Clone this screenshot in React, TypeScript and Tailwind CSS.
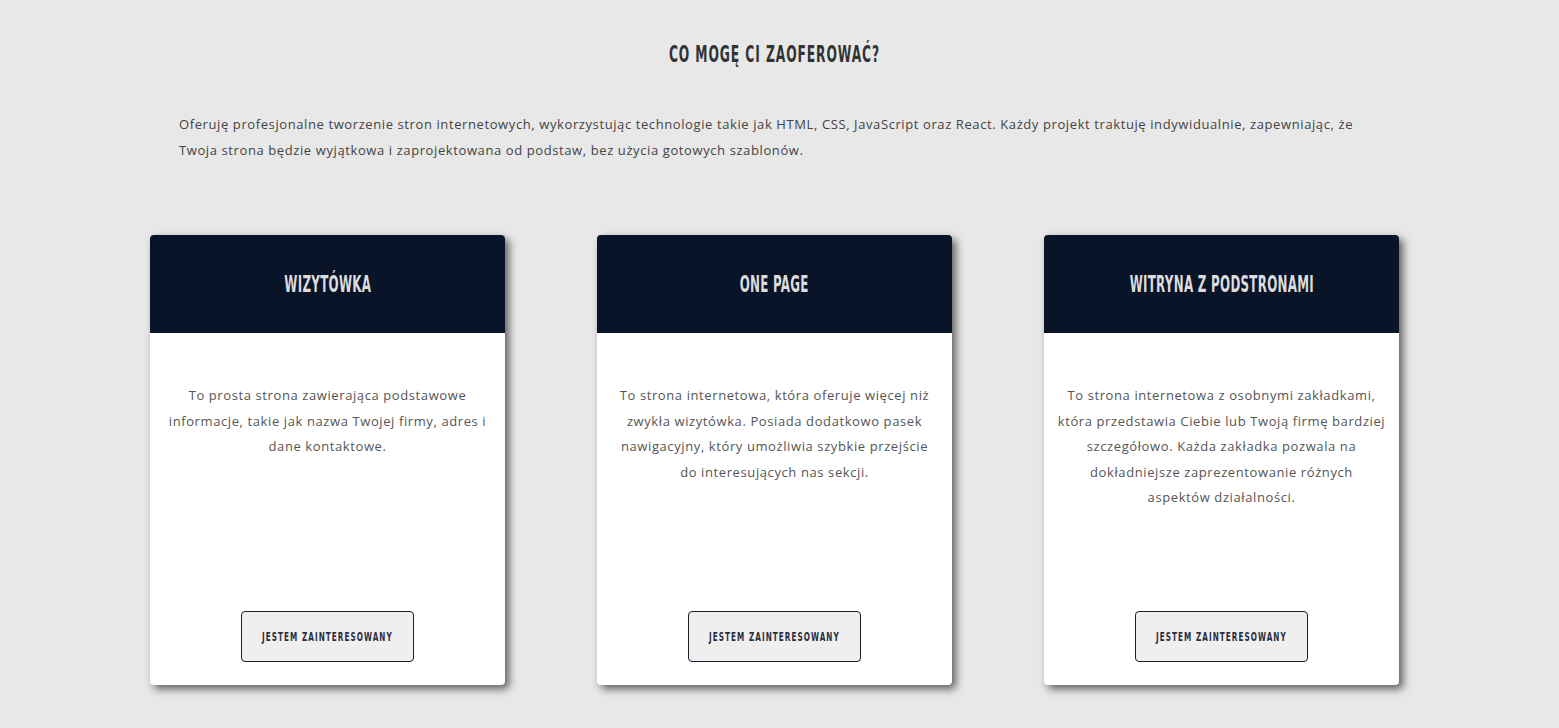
const cards = [
  {
    title: "Wizytówka",
    text: "To prosta strona zawierająca podstawowe informacje, takie jak nazwa Twojej firmy, adres i dane kontaktowe.",
  },
  {
    title: "One page",
    text: "To strona internetowa, która oferuje więcej niż zwykła wizytówka. Posiada dodatkowo pasek nawigacyjny, który umożliwia szybkie przejście do\u00a0interesujących nas sekcji.",
  },
  {
    title: "Witryna z podstronami",
    text: "To strona internetowa z osobnymi zakładkami, która przedstawia Ciebie lub Twoją firmę bardziej szczegółowo. Każda zakładka pozwala na dokładniejsze zaprezentowanie różnych aspektów działalności.",
  },
];

const display = "font-['DejaVu_Sans_Condensed','DejaVu_Sans',sans-serif] font-bold uppercase whitespace-nowrap";
const body = "font-['Open_Sans','Lato',sans-serif]";

export default function App() {
  return (
    <div className="min-h-screen bg-[#e8e8e8] pr-[10px]">
      {/* Heading */}
      <div className="flex justify-center pt-[40px]">
        <h2 className={`${display} inline-block scale-x-[0.595] text-[23px] leading-[28px] tracking-[1.5px] text-[#333]`}>
          Co mogę ci zaoferować?
        </h2>
      </div>

      {/* Intro */}
      <p className={`${body} mx-auto mt-[43px] w-[1191px] text-[13px] leading-[26px] tracking-[0.6px] text-[#444]`}>
        Oferuję profesjonalne tworzenie stron internetowych, wykorzystując technologie takie jak HTML, CSS, JavaScript oraz React. Każdy projekt traktuję indywidualnie, zapewniając, że Twoja strona będzie wyjątkowa i zaprojektowana od podstaw, bez użycia gotowych szablonów.
      </p>

      {/* Offer cards */}
      <div className="mx-auto mt-[72px] flex w-[1249px] gap-[92px]">
        {cards.map((c) => (
          <div
            key={c.title}
            className="flex h-[450px] w-[355px] flex-col overflow-hidden rounded-[4px] bg-white shadow-[4px_4px_8px_rgba(0,0,0,0.6)]"
          >
            <div className="flex h-[98px] items-center justify-center bg-[#0a1428]">
              <h3 className={`${display} inline-block scale-x-[0.573] text-[23px] leading-[28px] tracking-[0.5px] text-[#dcdcdc]`}>
                {c.title}
              </h3>
            </div>
            <div className="flex flex-1 flex-col items-center px-[13px] pt-[50px] pb-[23px]">
              <p className={`${body} text-center text-[13px] leading-[25.5px] tracking-[0.6px] text-[#555]`}>
                {c.text}
              </p>
              <button className="mt-auto flex h-[51px] w-[173px] items-center justify-center rounded-[4px] border border-[#1a1f2e] bg-[#efefef]">
                <span className={`${display} inline-block scale-x-[0.62] text-[13px] leading-[16px] tracking-[1.7px] text-[#2a2d3e]`}>
                  Jestem zainteresowany
                </span>
              </button>
            </div>
          </div>
        ))}
      </div>
    </div>
  );
}
